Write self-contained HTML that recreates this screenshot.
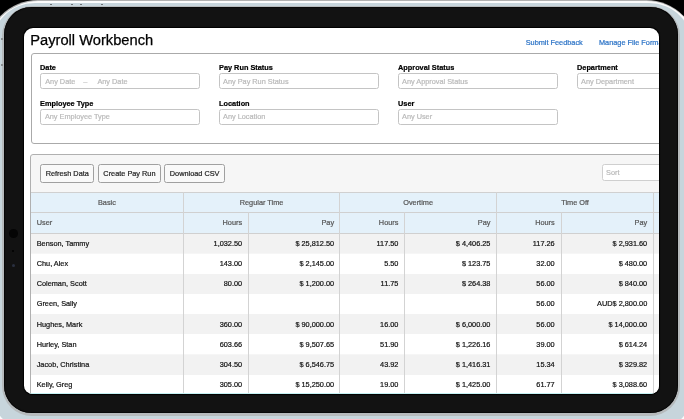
<!DOCTYPE html>
<html><head><meta charset="utf-8">
<style>
*{box-sizing:border-box;margin:0;padding:0}
html,body{width:684px;height:419px;overflow:hidden;background:#000}
body{position:relative;font-family:"Liberation Sans",sans-serif;color:#222;-webkit-font-smoothing:antialiased}
.abs{position:absolute}
#o1{left:-13.9px;top:0px;width:711.8px;height:436px;border-radius:51.7px;background:#b0b0b0}
#o2{left:-13.5px;top:0.5px;width:711px;height:435px;border-radius:51.3px;background:#fbfbfb}
#o3{left:-8.9px;top:3.3px;width:701.8px;height:430px;border-radius:44px;background:#c7d5dc}
#o4{left:2.2px;top:5.6px;width:677.8px;height:410.2px;border-radius:30px;background:#b6babc}
#bez{left:4.4px;top:7.2px;width:673.9px;height:406px;border-radius:27.5px;background:#121212;box-shadow:inset 0 0 0.8px 0.6px #000}
#screen{left:23.8px;top:27.5px;width:635px;height:366px;border-radius:9px 9px 8.5px 8.5px;background:#fff;overflow:hidden;box-shadow:0 0 0.8px 0.6px #000}
#pg{position:absolute;left:-23.8px;top:-27.5px;width:684px;height:419px;will-change:transform}
.t{position:absolute;white-space:nowrap;line-height:0;height:0;-webkit-text-stroke:0.2px currentColor}
.title{font-size:14.7px;color:#000;-webkit-text-stroke:0.25px #000}
.link{font-size:7.33px;color:#2a72c6}
.lab{font-size:7.35px;font-weight:bold;color:#000}
.ph{font-size:7.33px;color:#b9b9b9}
.th{font-size:7.33px;color:#555}
.td{font-size:7.33px;color:#111}
.bt{font-size:7.33px;color:#222}
.panel1{left:30.5px;top:52.5px;width:700px;height:91.5px;border:1px solid #aaaaaa;border-radius:3px;background:#fff}
.inp{width:159.5px;height:16px;border:1px solid #c4c4c4;border-radius:2.5px;background:#fff}
.panel2{left:30px;top:154px;width:700px;height:300px;border:1px solid #b0b0b0;border-radius:3px;background:#f6f6f6}
.btn{top:164px;height:19px;border:1px solid #a0a0a0;border-radius:2.5px;background:#f9f9f9}
.sort{left:602px;top:164.2px;width:100px;height:16.4px;border:1px solid #cfcfcf;border-radius:2.5px;background:#fff}
.hdr{left:31px;width:700px;height:20.5px;background:#e4f1fa;border-top:1px solid #d0d0d0}
.drow{left:31px;width:700px;height:20.2px}
.vl{width:1px;background:#d3d3d3}
.hl{left:31px;width:700px;height:1px;background:#d0d0d0}
.dot{position:absolute;border-radius:50%}
</style></head>
<body>
<div id="o1" class="abs"></div>
<div id="o2" class="abs"></div>
<div id="o3" class="abs"></div>
<div id="o4" class="abs"></div>
<div id="bez" class="abs"></div>
<div class="abs" style="left:50.3px;top:3.8px;width:2px;height:1.6px;background:#6e7274"></div>
<div class="abs" style="left:71.3px;top:3.8px;width:2px;height:1.6px;background:#6e7274"></div>
<div class="abs" style="left:80.2px;top:3.8px;width:2px;height:1.6px;background:#6e7274"></div>
<div class="abs" style="left:100.5px;top:3.8px;width:2px;height:1.6px;background:#6e7274"></div>
<div class="abs" style="left:1.3px;top:37.8px;width:1.5px;height:1.8px;background:#8a8e90"></div>
<div class="abs" style="left:1.3px;top:64.3px;width:1.5px;height:1.8px;background:#8a8e90"></div>
<div class="dot" style="left:9px;top:229px;width:8.6px;height:8.6px;background:#050505"></div>
<div class="dot" style="left:12.3px;top:250px;width:2px;height:2px;background:#000"></div>
<div class="dot" style="left:11.8px;top:264px;width:3px;height:3px;background:#2a3040"></div>
<div id="screen" class="abs"><div id="pg">
<div class="t title" style="left:30.20px;top:39.71px">Payroll Workbench</div>
<div class="t link" style="left:525.70px;top:42.96px">Submit Feedback</div>
<div class="t link" style="left:599.00px;top:42.96px">Manage File Formats</div>
<div class="abs panel1"></div>
<div class="t lab" style="left:40.00px;top:67.85px">Date</div>
<div class="abs inp" style="left:40.0px;top:72.5px"></div>
<div class="t ph" style="left:45.20px;top:81.56px">Any Date</div>
<div class="t ph" style="left:83.20px;top:81.56px">&ndash;</div>
<div class="t ph" style="left:97.40px;top:81.56px">Any Date</div>
<div class="t lab" style="left:219.00px;top:67.85px">Pay Run Status</div>
<div class="abs inp" style="left:219.0px;top:72.5px"></div>
<div class="t ph" style="left:223.00px;top:81.56px">Any Pay Run Status</div>
<div class="t lab" style="left:398.00px;top:67.85px">Approval Status</div>
<div class="abs inp" style="left:398.0px;top:72.5px"></div>
<div class="t ph" style="left:402.00px;top:81.56px">Any Approval Status</div>
<div class="t lab" style="left:577.00px;top:67.85px">Department</div>
<div class="abs inp" style="left:577.0px;top:72.5px"></div>
<div class="t ph" style="left:581.00px;top:81.56px">Any Department</div>
<div class="t lab" style="left:40.00px;top:103.85px">Employee Type</div>
<div class="abs inp" style="left:40.0px;top:108.5px"></div>
<div class="t ph" style="left:44.90px;top:117.26px">Any Employee Type</div>
<div class="t lab" style="left:219.00px;top:103.85px">Location</div>
<div class="abs inp" style="left:219.0px;top:108.5px"></div>
<div class="t ph" style="left:223.00px;top:117.26px">Any Location</div>
<div class="t lab" style="left:398.00px;top:103.85px">User</div>
<div class="abs inp" style="left:398.0px;top:108.5px"></div>
<div class="t ph" style="left:402.00px;top:117.26px">Any User</div>
<div class="abs panel2"></div>
<div class="abs btn" style="left:40.2px;width:54.10px"></div>
<div class="t bt" style="left:67.25px;top:173.96px;transform:translateX(-50%)">Refresh Data</div>
<div class="abs btn" style="left:98.3px;width:62.30px"></div>
<div class="t bt" style="left:129.45px;top:173.96px;transform:translateX(-50%)">Create Pay Run</div>
<div class="abs btn" style="left:164.3px;width:60.70px"></div>
<div class="t bt" style="left:194.65px;top:173.96px;transform:translateX(-50%)">Download CSV</div>
<div class="abs sort"></div>
<div class="t ph" style="left:606.00px;top:172.96px">Sort</div>
<div class="abs hdr" style="top:192.3px"></div>
<div class="abs hdr" style="top:212.3px"></div>
<div class="abs drow" style="top:233.30px;background:#f2f2f2"></div>
<div class="abs drow" style="top:253.50px;background:#fff"></div>
<div class="abs drow" style="top:273.70px;background:#f2f2f2"></div>
<div class="abs drow" style="top:293.90px;background:#fff"></div>
<div class="abs drow" style="top:314.10px;background:#f2f2f2"></div>
<div class="abs drow" style="top:334.30px;background:#fff"></div>
<div class="abs drow" style="top:354.50px;background:#f2f2f2"></div>
<div class="abs drow" style="top:374.70px;background:#fff"></div>
<div class="abs hl" style="top:233px"></div>
<div class="abs vl" style="left:182.90px;top:192.3px;height:226.7px"></div>
<div class="abs vl" style="left:247.50px;top:212.3px;height:206.7px"></div>
<div class="abs vl" style="left:339.20px;top:192.3px;height:226.7px"></div>
<div class="abs vl" style="left:403.90px;top:212.3px;height:206.7px"></div>
<div class="abs vl" style="left:496.00px;top:192.3px;height:226.7px"></div>
<div class="abs vl" style="left:560.80px;top:212.3px;height:206.7px"></div>
<div class="abs vl" style="left:653.10px;top:192.3px;height:226.7px"></div>
<div class="t th" style="left:106.95px;top:202.86px;transform:translateX(-50%)">Basic</div>
<div class="t th" style="left:261.55px;top:202.86px;transform:translateX(-50%)">Regular Time</div>
<div class="t th" style="left:418.10px;top:202.86px;transform:translateX(-50%)">Overtime</div>
<div class="t th" style="left:575.05px;top:202.86px;transform:translateX(-50%)">Time Off</div>
<div class="t th" style="left:36.70px;top:223.16px">User</div>
<div class="t th" style="right:441.90px;top:223.16px">Hours</div>
<div class="t th" style="right:349.90px;top:223.16px">Pay</div>
<div class="t th" style="right:285.60px;top:223.16px">Hours</div>
<div class="t th" style="right:193.60px;top:223.16px">Pay</div>
<div class="t th" style="right:129.30px;top:223.16px">Hours</div>
<div class="t th" style="right:36.80px;top:223.16px">Pay</div>
<div class="t td" style="left:36.70px;top:243.86px">Benson, Tammy</div>
<div class="t td" style="right:441.90px;top:243.86px">1,032.50</div>
<div class="t td" style="right:349.90px;top:243.86px">$ 25,812.50</div>
<div class="t td" style="right:285.60px;top:243.86px">117.50</div>
<div class="t td" style="right:193.60px;top:243.86px">$ 4,406.25</div>
<div class="t td" style="right:129.30px;top:243.86px">117.26</div>
<div class="t td" style="right:36.80px;top:243.86px">$ 2,931.60</div>
<div class="t td" style="left:36.70px;top:264.02px">Chu, Alex</div>
<div class="t td" style="right:441.90px;top:264.02px">143.00</div>
<div class="t td" style="right:349.90px;top:264.02px">$ 2,145.00</div>
<div class="t td" style="right:285.60px;top:264.02px">5.50</div>
<div class="t td" style="right:193.60px;top:264.02px">$ 123.75</div>
<div class="t td" style="right:129.30px;top:264.02px">32.00</div>
<div class="t td" style="right:36.80px;top:264.02px">$ 480.00</div>
<div class="t td" style="left:36.70px;top:284.18px">Coleman, Scott</div>
<div class="t td" style="right:441.90px;top:284.18px">80.00</div>
<div class="t td" style="right:349.90px;top:284.18px">$ 1,200.00</div>
<div class="t td" style="right:285.60px;top:284.18px">11.75</div>
<div class="t td" style="right:193.60px;top:284.18px">$ 264.38</div>
<div class="t td" style="right:129.30px;top:284.18px">56.00</div>
<div class="t td" style="right:36.80px;top:284.18px">$ 840.00</div>
<div class="t td" style="left:36.70px;top:304.34px">Green, Sally</div>
<div class="t td" style="right:129.30px;top:304.34px">56.00</div>
<div class="t td" style="right:36.80px;top:304.34px">AUD$ 2,800.00</div>
<div class="t td" style="left:36.70px;top:324.50px">Hughes, Mark</div>
<div class="t td" style="right:441.90px;top:324.50px">360.00</div>
<div class="t td" style="right:349.90px;top:324.50px">$ 90,000.00</div>
<div class="t td" style="right:285.60px;top:324.50px">16.00</div>
<div class="t td" style="right:193.60px;top:324.50px">$ 6,000.00</div>
<div class="t td" style="right:129.30px;top:324.50px">56.00</div>
<div class="t td" style="right:36.80px;top:324.50px">$ 14,000.00</div>
<div class="t td" style="left:36.70px;top:344.66px">Hurley, Stan</div>
<div class="t td" style="right:441.90px;top:344.66px">603.66</div>
<div class="t td" style="right:349.90px;top:344.66px">$ 9,507.65</div>
<div class="t td" style="right:285.60px;top:344.66px">51.90</div>
<div class="t td" style="right:193.60px;top:344.66px">$ 1,226.16</div>
<div class="t td" style="right:129.30px;top:344.66px">39.00</div>
<div class="t td" style="right:36.80px;top:344.66px">$ 614.24</div>
<div class="t td" style="left:36.70px;top:364.82px">Jacob, Christina</div>
<div class="t td" style="right:441.90px;top:364.82px">304.50</div>
<div class="t td" style="right:349.90px;top:364.82px">$ 6,546.75</div>
<div class="t td" style="right:285.60px;top:364.82px">43.92</div>
<div class="t td" style="right:193.60px;top:364.82px">$ 1,416.31</div>
<div class="t td" style="right:129.30px;top:364.82px">15.34</div>
<div class="t td" style="right:36.80px;top:364.82px">$ 329.82</div>
<div class="t td" style="left:36.70px;top:384.98px">Kelly, Greg</div>
<div class="t td" style="right:441.90px;top:384.98px">305.00</div>
<div class="t td" style="right:349.90px;top:384.98px">$ 15,250.00</div>
<div class="t td" style="right:285.60px;top:384.98px">19.00</div>
<div class="t td" style="right:193.60px;top:384.98px">$ 1,425.00</div>
<div class="t td" style="right:129.30px;top:384.98px">61.77</div>
<div class="t td" style="right:36.80px;top:384.98px">$ 3,088.60</div>
<div class="abs" style="left:0;top:392.9px;width:684px;height:0.8px;background:#c4f1f3"></div>
</div></div>
</body></html>
